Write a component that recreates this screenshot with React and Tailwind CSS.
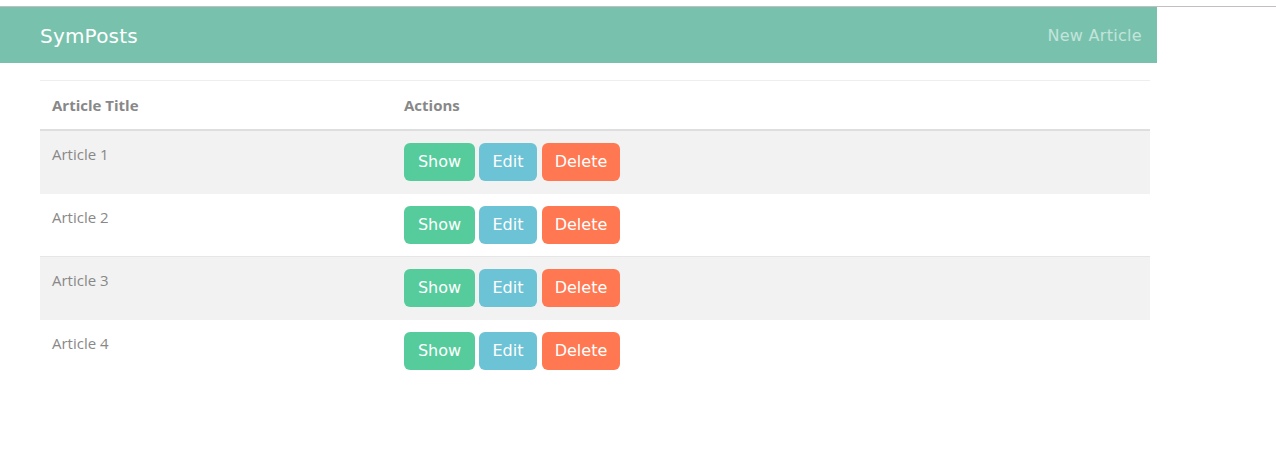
import React from 'react';

const articles = ['Article 1', 'Article 2', 'Article 3', 'Article 4'];

function Btn({ label, color, width }) {
  return (
    <a
      href="#"
      className={`inline-flex items-center justify-center h-[38px] rounded-[6px] text-white text-[16px] ${color} ${width}`}
    >
      {label}
    </a>
  );
}

function App() {
  return (
    <div className="min-h-screen bg-white">
      <div className="h-[6px]" />
      <div className="h-px bg-[#c4bdc1]" />
      <nav className="w-[1157px] h-[56px] bg-[#78c2ad] flex items-center justify-between pl-[40px] pr-[15px] font-['DejaVu_Sans',sans-serif]">
        <a href="#" className="text-white text-[20px] tracking-[0.2px] mt-px">SymPosts</a>
        <a href="#" className="text-[#c4e4db] text-[16px] tracking-[0.3px] mt-px">New Article</a>
      </nav>
      <div className="pl-[40px] pt-[17px] w-[1150px]">
        <table className="w-full border-collapse text-[15px] text-[#888888] font-['Open_Sans',sans-serif]">
          <thead>
            <tr className="border-t border-[#eeeeee]">
              <th className="w-[352px] text-left font-bold px-[12px] h-[49px] align-middle border-b-2 border-[#dedede]">Article Title</th>
              <th className="text-left font-bold px-[12px] h-[49px] align-middle border-b-2 border-[#dedede]">Actions</th>
            </tr>
          </thead>
          <tbody>
            {articles.map((title, i) => (
              <tr
                key={title}
                className={`${i % 2 === 0 ? 'bg-[#f2f2f2]' : 'bg-white'} ${i === 0 ? '' : i % 2 === 0 ? 'border-t border-[#e6e6e6]' : 'border-t border-[#f2f2f2]'}`}
              >
                <td className="align-top px-[12px] pt-[12px] h-[63px]">{title}</td>
                <td className="align-top px-[12px] pt-[12px] pb-[12px]">
                  <div className="flex gap-[4px] font-['DejaVu_Sans',sans-serif]">
                    <Btn label="Show" color="bg-[#56cc9d]" width="w-[71px]" />
                    <Btn label="Edit" color="bg-[#6cc3d5]" width="w-[58px]" />
                    <Btn label="Delete" color="bg-[#ff7851]" width="w-[78px] ml-px" />
                  </div>
                </td>
              </tr>
            ))}
          </tbody>
        </table>
      </div>
    </div>
  );
}

export default App;
